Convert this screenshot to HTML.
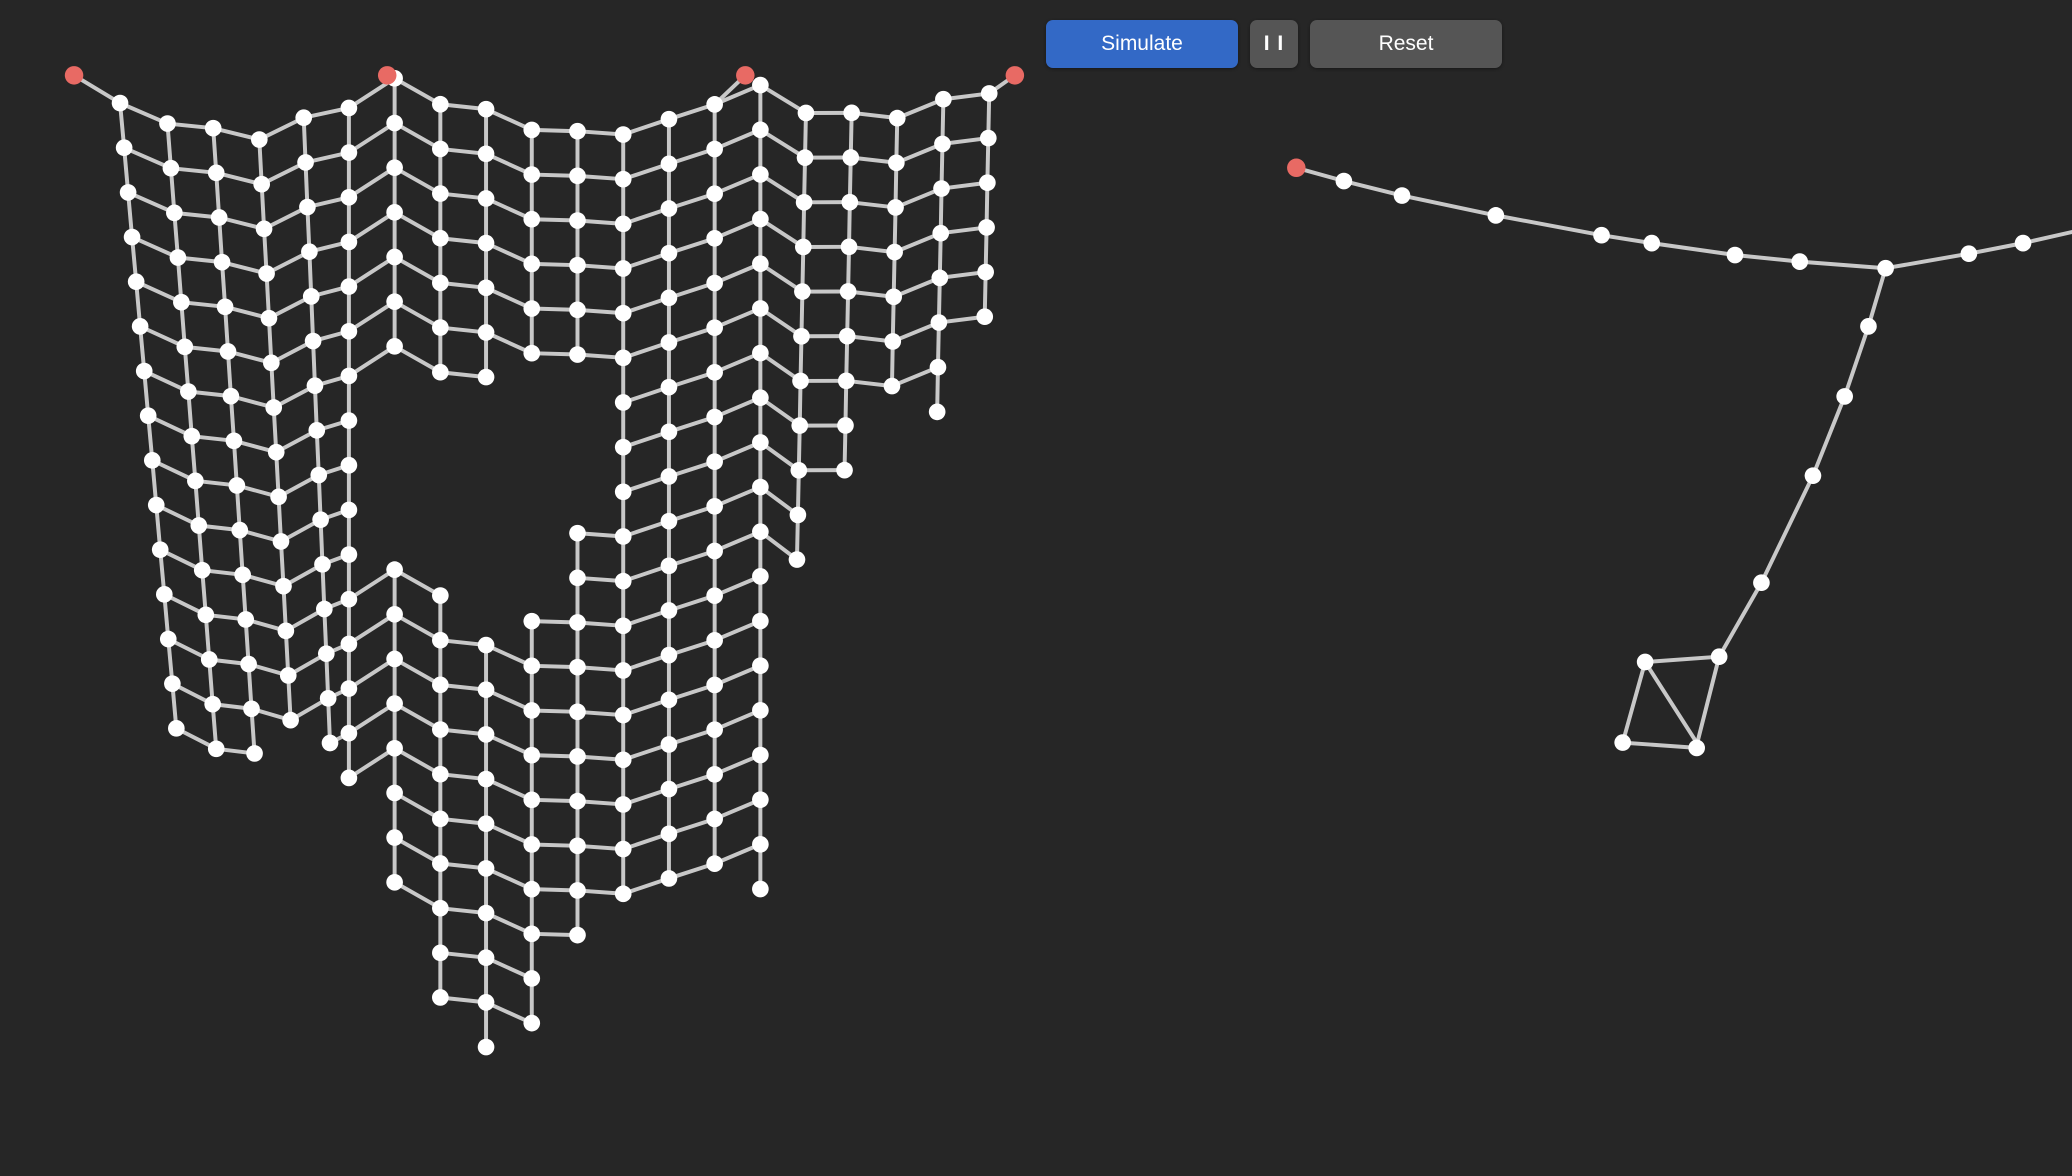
<!DOCTYPE html>
<html><head><meta charset="utf-8"><style>
html,body{margin:0;padding:0;background:#262626;width:2072px;height:1176px;overflow:hidden;font-family:"Liberation Sans",sans-serif}
.b{position:absolute;top:20px;height:48px;border-radius:7px;color:#fff;font-size:21px;display:flex;align-items:center;justify-content:center;box-shadow:0 1px 3px rgba(0,0,0,.4)}
svg{position:absolute;left:0;top:0}
</style></head><body>
<svg id="s" width="2072" height="1176" viewBox="0 0 1568 890"></svg>
<div class="b" style="left:1046px;width:192px;background:#3369c6">Simulate</div>
<div class="b" style="left:1250px;width:48px;background:#555;letter-spacing:1px;font-weight:bold">I I</div>
<div class="b" style="left:1310px;width:192px;background:#555">Reset</div>
<script>
(function(){
var s=document.getElementById('s'),E='',N='';
function ln(a,b){E+='<line x1="'+a[0]+'" y1="'+a[1]+'" x2="'+b[0]+'" y2="'+b[1]+'"/>';}
function nd(p,r,c){N+='<circle cx="'+p[0]+'" cy="'+p[1]+'" r="'+(r||6.3)+'" fill="'+(c||'#fff')+'"/>';}
function interp(pts,x){for(var i=0;i<pts.length-1;i++){if(x<=pts[i+1][0]){var t=(x-pts[i][0])/(pts[i+1][0]-pts[i][0]);return pts[i][1]+t*(pts[i+1][1]-pts[i][1]);}}return pts[pts.length-1][1];}
function inPoly(P,x,y){var c=false;for(var i=0,j=P.length-1;i<P.length;j=i++){var a=P[i],b=P[j];if(((a[1]>y)!=(b[1]>y))&&(x<(b[0]-a[0])*(y-a[1])/(b[1]-a[1])+a[0]))c=!c;}return c;}
var tp=[[56,57],[91,78],[160,97],[200,100],[262,77],[293,57],[330,72],[430,100],[500,93],[535,77],[564,57],[595,77],[660,88],[735,70],[768,57]];
var bt=[[90,560],[150,582],[220,570],[257,607],[290,650],[325,775],[388,800],[417,748],[440,722],[470,706],[500,690],[530,672],[590,672],[600,460],[620,390],[657,348],[692,302],[725,322],[750,250]];
var hole=[[278,285],[360,288],[458,275],[450,350],[438,385],[405,440],[377,458],[343,452],[314,428],[290,400],[278,360],[268,320]];
var C=20,G=[];
for(var i=0;i<C;i++){G[i]=[];var x0=91+i*34.6;var yt=interp(tp,x0);var yb=interp(bt,x0);
 for(var r=0;r<40;r++){var y=yt+r*33.8+(i%2?6:0);if(y>yb+4)break;
  var sh=0;if(x0<260)sh=(y-80)*0.09*(1-(x0-91)/260);if(x0>600)sh=-(y-80)*0.02;
  var x=x0+sh;
  if(inPoly(hole,x,y)){G[i][r]=null;continue;}
  G[i][r]=[+x.toFixed(1),+y.toFixed(1)];}}
for(var i=0;i<C;i++)for(var r=0;r<G[i].length;r++){var p=G[i][r];if(!p)continue;
 if(G[i][r+1])ln(p,G[i][r+1]);if(i<C-1&&G[i+1][r])ln(p,G[i+1][r]);nd(p);}
[[56,57],[293,57],[564,57],[768,57]].forEach(function(p,k){var c=[0,6,13,19][k];if(G[c]&&G[c][0])ln(p,G[c][0]);});
var ch=[[981,127],[1017,137],[1061,148],[1132,163],[1212,178],[1250,184],[1313,193],[1362,198],[1427,203],[1490,192],[1531,184],[1575,174]];
for(var k=0;k<ch.length-1;k++)ln(ch[k],ch[k+1]);
var dn=[[1427,203],[1414,247],[1396,300],[1372,360],[1333,441],[1301,497]];
for(var k=0;k<dn.length-1;k++)ln(dn[k],dn[k+1]);
var q=[[1301,497],[1245,501],[1228,562],[1284,566],[1285,560],[1301,497]];
for(var k=0;k<q.length-1;k++)ln(q[k],q[k+1]);ln([1245,501],[1284,562]);
ch.slice(1).concat(dn.slice(1),q.slice(1,4)).forEach(function(p){nd(p)});
[[56,57],[293,57],[564,57],[768,57],[981,127]].forEach(function(p){nd(p,7,'#e86a64')});
s.innerHTML='<g stroke="#c8c8c8" stroke-width="3" stroke-linecap="round">'+E+'</g>'+N;
})();
</script>
</body></html>
